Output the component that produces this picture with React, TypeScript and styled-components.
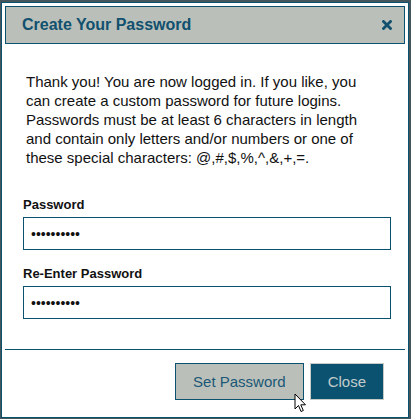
import styled, { createGlobalStyle } from 'styled-components';

const GlobalStyle = createGlobalStyle`
  html, body {
    margin: 0;
    padding: 0;
    background: #46555c;
    font-family: 'Liberation Sans', Arial, sans-serif;
  }
`;

const Page = styled.div`
  width: 411px;
  height: 419px;
  padding: 2px 2px 1px 1px;
  box-sizing: border-box;
`;

const Dialog = styled.div`
  position: relative;
  box-sizing: border-box;
  height: 100%;
  background: #fff;
  border: 1px solid #0b5270;
  padding: 3px;
  display: flex;
  flex-direction: column;
`;

const Header = styled.div`
  height: 38px;
  flex-shrink: 0;
  box-sizing: border-box;
  background: #bac0b9;
  border: 1px solid #0b5270;
  display: flex;
  align-items: center;
  justify-content: space-between;
  padding: 0 12px 0 16px;
`;

const Title = styled.h1`
  margin: 0;
  font-size: 16px;
  font-weight: bold;
  color: #11506e;
`;

const CloseX = styled.button`
  border: none;
  background: none;
  padding: 0;
  width: 10px;
  height: 10px;
  display: flex;
  cursor: pointer;
`;

const Body = styled.div`
  flex: 1;
  padding: 28px 14px 0 18px;
`;

const Intro = styled.p`
  margin: 0 0 30px 3px;
  max-width: 350px;
  font-size: 15px;
  line-height: 19px;
  color: #111;
`;

const Field = styled.div`
  & + & {
    margin-top: 16px;
  }
`;

const Label = styled.label`
  display: block;
  font-size: 13px;
  font-weight: bold;
  line-height: 16px;
  color: #111;
  margin-bottom: 4px;
`;

const Input = styled.input`
  display: block;
  width: 100%;
  height: 33px;
  box-sizing: border-box;
  border: 1px solid #0b5270;
  border-radius: 0;
  padding: 0 7px;
  font-family: 'Liberation Sans', Arial, sans-serif;
  font-size: 14px;
  color: #111;
  outline: none;
  caret-color: #000;
`;

const Footer = styled.div`
  flex-shrink: 0;
  border-top: 1px solid #0b5270;
  display: flex;
  justify-content: flex-end;
  gap: 6px;
  padding: 13px 21px 14px 0;
`;

const Button = styled.button<{ $primary?: boolean }>`
  height: 37px;
  box-sizing: border-box;
  padding: 0 17px;
  font-family: 'Liberation Sans', Arial, sans-serif;
  font-size: 15px;
  cursor: pointer;
  border: 1px solid ${(p) => (p.$primary ? '#c6cbc6' : '#0b5270')};
  background: ${(p) => (p.$primary ? '#0b5270' : '#bac0b9')};
  color: ${(p) => (p.$primary ? '#c3cccc' : '#1b5776')};
`;

const Pointer = styled.svg`
  position: absolute;
  left: 292px;
  top: 390px;
  pointer-events: none;
`;

export default function App() {
  return (
    <>
      <GlobalStyle />
      <Page>
        <Dialog>
          <Header>
            <Title>Create Your Password</Title>
            <CloseX aria-label="Close">
              <svg width="10" height="10" viewBox="0 0 10 10">
                <path d="M1.5 1.5 L8.5 8.5 M8.5 1.5 L1.5 8.5" stroke="#11506e" strokeWidth="2.8" strokeLinecap="square" />
              </svg>
            </CloseX>
          </Header>
          <Body>
            <Intro>
              Thank you! You are now logged in. If you like, you can create a custom password for future logins.
              Passwords must be at least 6 characters in length and contain only letters and/or numbers or one of
              these special characters: @,#,$,%,^,&amp;,+,=.
            </Intro>
            <Field>
              <Label>Password</Label>
              <Input type="password" defaultValue="abcdefghij" readOnly />
            </Field>
            <Field>
              <Label>Re-Enter Password</Label>
              <Input type="password" defaultValue="abcdefghij" autoFocus />
            </Field>
          </Body>
          <Footer>
            <Button>Set Password</Button>
            <Button $primary>Close</Button>
          </Footer>
          <Pointer width="13" height="20" viewBox="0 0 13 20">
            <path d="M1 1 L1 16 L4.5 12.5 L7 18.5 L9.3 17.5 L6.8 11.8 L11.5 11.8 Z" fill="#fff" stroke="#000" strokeWidth="1" strokeLinejoin="miter" />
          </Pointer>
        </Dialog>
      </Page>
    </>
  );
}
